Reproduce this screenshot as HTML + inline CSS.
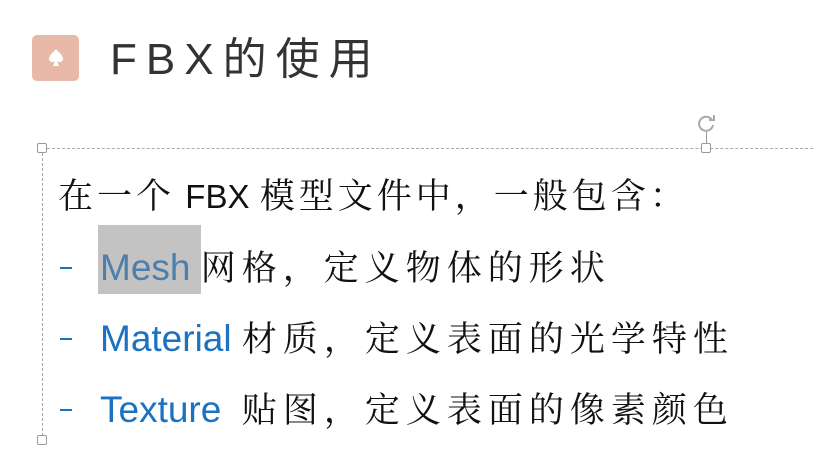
<!DOCTYPE html>
<html><head><meta charset="utf-8"><style>
body{margin:0;width:815px;height:453px;background:#fff;position:relative;overflow:hidden;font-family:"Liberation Sans","Noto Sans CJK SC",sans-serif}
.a{position:absolute;white-space:nowrap}
.cj{font-family:"Noto Serif CJK SC","Noto Sans CJK SC",serif;letter-spacing:6px;color:#111;font-size:35px}
.b{color:#1a72c0}
.l{font-size:37px;line-height:40px}
.d{position:absolute;width:12px;height:2px;background:#1a72c0;left:60px}
.h{position:absolute;width:8px;height:8px;border:1px solid #999;background:#fff;border-radius:2px}
</style></head><body>
<div class="a" style="left:32px;top:35px;width:47px;height:46px;background:#e8b9a9;border-radius:5px"></div>
<svg class="a" style="left:44px;top:46px" width="24" height="24" viewBox="0 0 24 24"><path d="M12 3C9 7 5 9 5 13c0 3 4 4 6 2l-2 5h6l-2-5c2 2 6 1 6-2 0-4-4-6-7-10z" fill="#fff"/></svg>
<div class="a" style="left:110px;top:30px;font-size:44px;letter-spacing:9px;color:#333;line-height:60px">FBX的使用</div>
<div class="a" style="left:42px;top:148px;width:780px;height:292px;border-top:1px dashed #aaa;border-left:1px dashed #aaa"></div>
<div class="h" style="left:37px;top:143px"></div>
<div class="h" style="left:37px;top:435px"></div>
<div class="h" style="left:701px;top:143px"></div>
<div class="a" style="left:706px;top:132px;width:1px;height:12px;background:#999"></div>
<svg class="a" style="left:695px;top:112px" width="22" height="22" viewBox="0 0 22 22"><path d="M17 8A7 7 0 1 0 18 13" fill="none" stroke="#aaa" stroke-width="2"/><path d="M14 8h5V3" fill="none" stroke="#aaa" stroke-width="2"/></svg>
<div class="a" style="left:98px;top:225px;width:103px;height:69px;background:#c3c3c3"></div>
<div class="a l" style="left:58px;top:174px"><span class="cj" style="letter-spacing:4px">在一个</span> <span style="color:#111;font-size:33px">FBX</span> <span class="cj" style="letter-spacing:4px">模型文件中，一般包含：</span></div>
<div class="d" style="top:267px"></div>
<div class="a l" style="left:100px;top:246px"><span style="color:#4f7eab">Mesh</span> <span class="cj">网格，定义物体的形状</span></div>
<div class="d" style="top:338px"></div>
<div class="a l" style="left:100px;top:317px"><span class="b">Material</span> <span class="cj">材质，定义表面的光学特性</span></div>
<div class="d" style="top:409px"></div>
<div class="a l" style="left:100px;top:388px"><span class="b">Texture</span>&nbsp; <span class="cj">贴图，定义表面的像素颜色</span></div>
</body></html>
